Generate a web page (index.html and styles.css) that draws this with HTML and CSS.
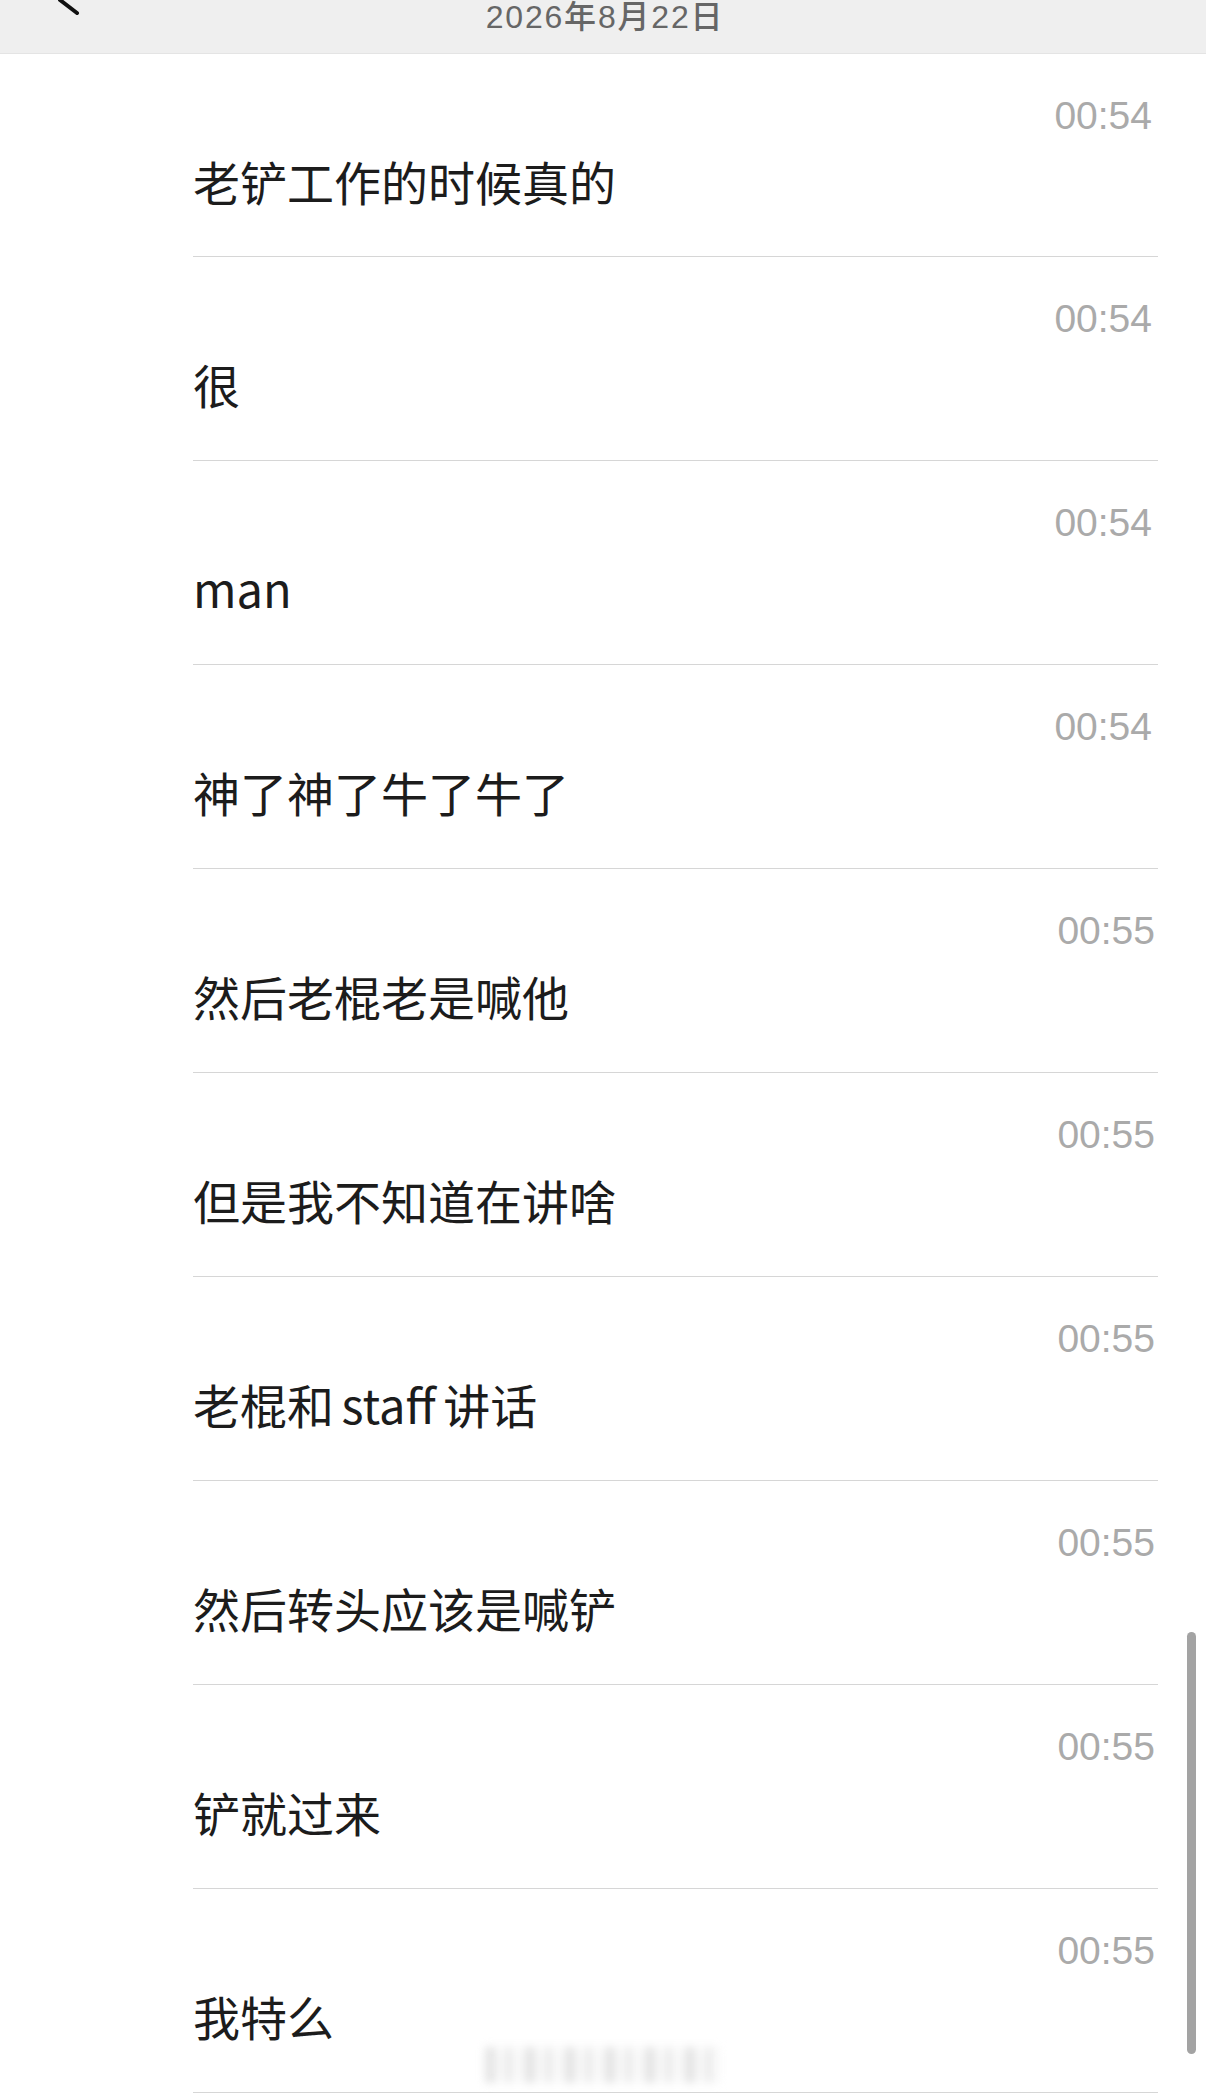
FILE: index.html
```html
<!DOCTYPE html>
<html lang="zh-CN">
<head>
<meta charset="utf-8">
<title>聊天记录</title>
<link rel="stylesheet" href="styles.css">
</head>
<body>
<div class="page">
  <header class="topbar">
    <svg class="back" width="40" height="20" viewBox="0 0 40 20"><path d="M58 -14 L60 0 L77 13" transform="translate(-40,0)" fill="none" stroke="#111" stroke-width="4" stroke-linecap="round"/></svg>
    <div class="date">2026年8月22日</div>
  </header>
  <main class="list">
    <div class="row"><div class="time">00:54</div><div class="msg">老铲工作的时候真的</div></div>
    <div class="row"><div class="time">00:54</div><div class="msg">很</div></div>
    <div class="row"><div class="time">00:54</div><div class="msg">man</div></div>
    <div class="row"><div class="time">00:54</div><div class="msg">神了神了牛了牛了</div></div>
    <div class="row"><div class="time t55">00:55</div><div class="msg">然后老棍老是喊他</div></div>
    <div class="row"><div class="time t55">00:55</div><div class="msg">但是我不知道在讲啥</div></div>
    <div class="row"><div class="time t55">00:55</div><div class="msg">老棍和 staff 讲话</div></div>
    <div class="row"><div class="time t55">00:55</div><div class="msg">然后转头应该是喊铲</div></div>
    <div class="row"><div class="time t55">00:55</div><div class="msg">铲就过来</div></div>
    <div class="row last"><div class="time t55">00:55</div><div class="msg">我特么</div><div class="mark"></div></div>
  </main>
  <div class="scrollbar"></div>
</div>
</body>
</html>
```

FILE: styles.css
```css
html, body {
  margin: 0;
  padding: 0;
  background: #ffffff;
}

.page {
  position: relative;
  width: 1206px;
  height: 2100px;
  overflow: hidden;
  font-family: "Noto Sans CJK SC", "Noto Sans", sans-serif;
}

.topbar {
  position: relative;
  height: 53px;
  background: #efefef;
  border-bottom: 1px solid #e4e4e4;
  display: flex;
  justify-content: center;
}

.back {
  position: absolute;
  left: 40px;
  top: 0;
}

.date {
  font-family: "Liberation Sans", "Noto Sans CJK SC", sans-serif;
  font-size: 32px;
  line-height: 34px;
  letter-spacing: 1.8px;
  color: #666666;
  font-weight: 500;
  padding-left: 4px;
}

.list {
  padding: 0 48px 0 193px;
}

.row {
  position: relative;
  height: 204px;
  box-sizing: border-box;
  border-bottom: 1px solid #d6d6d6;
  display: flex;
  flex-direction: column;
  padding-top: 42px;
}

.list .row:first-child {
  height: 203px;
}

.time {
  align-self: flex-end;
  margin-right: 6px;
  font-family: "Liberation Sans", sans-serif;
  font-size: 39px;
  line-height: 39px;
  color: #aaaaaa;
}

.time.t55 {
  margin-right: 3px;
}

.msg {
  margin-top: 22px;
  font-size: 47px;
  line-height: 47px;
  color: #1c1c1c;
  word-spacing: -3px;
}

.mark {
  position: absolute;
  left: 292px;
  top: 158px;
  width: 236px;
  height: 36px;
  background: repeating-linear-gradient(90deg, #d2d2d2 0 10px, #f4f4f4 10px 22px, #cccccc 22px 26px, #f6f6f6 26px 40px);
  filter: blur(4px);
  opacity: 0.6;
}

.scrollbar {
  position: absolute;
  left: 1187px;
  top: 1632px;
  width: 9px;
  height: 422px;
  border-radius: 5px;
  background: #a3a3a3;
}
```
